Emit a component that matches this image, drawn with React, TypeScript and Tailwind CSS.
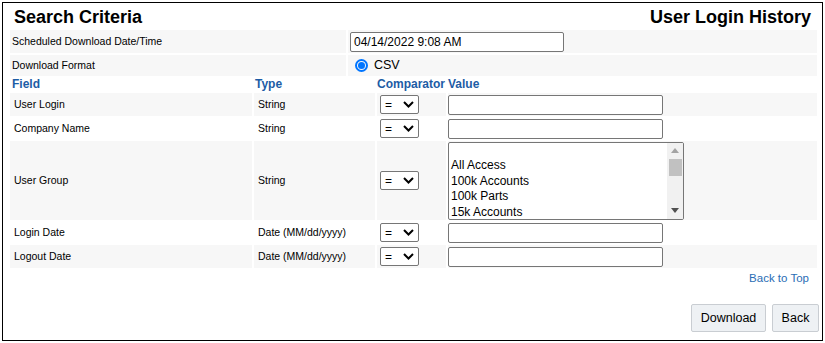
import React from "react";

const font = { fontFamily: '"Liberation Sans", Arial, sans-serif' };

function Chevron() {
  return (
    <svg width="11" height="7" viewBox="0 0 11 7" className="block">
      <path d="M1 1 L5.5 5.5 L10 1" fill="none" stroke="#000" strokeWidth="2" />
    </svg>
  );
}

function CompSelect() {
  return (
    <div className="w-[39px] h-[19px] border border-[#767676] rounded-[2px] bg-white flex items-center justify-between pl-[4px] pr-[4px]">
      <span className="text-[12px] leading-none text-black">=</span>
      <Chevron />
    </div>
  );
}

function TextInput({ w = 215 }: { w?: number }) {
  return (
    <div
      className="h-[20px] border border-[#767676] rounded-[2px] bg-white"
      style={{ width: w }}
    />
  );
}

function ListBox() {
  const opts = ["", "All Access", "100k Accounts", "100k Parts", "15k Accounts"];
  return (
    <div className="w-[236px] h-[78px] border border-[#767676] rounded-[2px] bg-white flex overflow-hidden">
      <div className="flex-1 flex flex-col pl-[2px]">
        {opts.map((o, i) => (
          <div key={i} className="h-[15.5px] text-[12px] leading-[15.5px] text-black whitespace-nowrap">
            {o || "\u00a0"}
          </div>
        ))}
      </div>
      <div className="w-[16px] bg-[#f1f1f1] flex flex-col items-center">
        <div className="h-[16px] flex items-center justify-center">
          <svg width="8" height="5" viewBox="0 0 8 5">
            <path d="M0 5 L4 0 L8 5 Z" fill="#a3a3a3" />
          </svg>
        </div>
        <div className="w-[13px] h-[17px] bg-[#c1c1c1]" />
        <div className="flex-1" />
        <div className="h-[16px] flex items-center justify-center">
          <svg width="8" height="5" viewBox="0 0 8 5">
            <path d="M0 0 L8 0 L4 5 Z" fill="#505050" />
          </svg>
        </div>
      </div>
    </div>
  );
}

type Row = { field: string; type: string; list?: boolean; bg: string };

const rows: Row[] = [
  { field: "User Login", type: "String", bg: "bg-[#f7f7f7]" },
  { field: "Company Name", type: "String", bg: "bg-white" },
  { field: "User Group", type: "String", list: true, bg: "bg-[#f7f7f7]" },
  { field: "Login Date", type: "Date (MM/dd/yyyy)", bg: "bg-white" },
  { field: "Logout Date", type: "Date (MM/dd/yyyy)", bg: "bg-[#f7f7f7]" },
];

export default function App() {
  return (
    <div className="p-[2px] bg-white" style={font}>
      <div className="w-[821px] h-[339px] border border-black bg-white flex flex-col">
        {/* Title */}
        <div className="h-[27px] flex items-end justify-between pl-[11px] pr-[11px] pb-[2px]">
          <span className="text-[18px] font-bold text-black leading-[21px]">Search Criteria</span>
          <span className="text-[18px] font-bold text-black leading-[21px]">User Login History</span>
        </div>

        <div className="pl-[7px] pr-[5px] flex flex-col">
          {/* Scheduled */}
          <div className="grid grid-cols-[336px_1fr] gap-x-[2px] h-[23px]">
            <div className="bg-[#f7f7f7] flex items-center pl-[2px] text-[10.5px] text-black">
              Scheduled Download Date/Time
            </div>
            <div className="bg-[#f7f7f7] flex items-center pl-[2px]">
              <div className="w-[214px] h-[20px] border border-[#767676] rounded-[2px] bg-white flex items-center pl-[3px] text-[12px] text-black">
                04/14/2022 9:08 AM
              </div>
            </div>
          </div>
          {/* Download format */}
          <div className="grid grid-cols-[336px_1fr] gap-x-[2px] h-[21px] mt-[2px]">
            <div className="bg-[#f7f7f7] flex items-center pl-[2px] text-[10.5px] text-black">
              Download Format
            </div>
            <div className="bg-[#f7f7f7] flex items-center pl-[7px] gap-[6px]">
              <div className="w-[13px] h-[13px] rounded-full border-2 border-[#0075ff] flex items-center justify-center">
                <div className="w-[7px] h-[7px] rounded-full bg-[#0075ff]" />
              </div>
              <span className="text-[12.5px] text-black">CSV</span>
            </div>
          </div>
          {/* Header */}
          <div className="grid grid-cols-[242px_121px_69px_1fr] gap-x-[2px] h-[16px] items-end text-[12px] font-bold text-[#1d5ca5] leading-[15px]">
            <div className="pl-[2px]">Field</div>
            <div className="pl-[1px]">Type</div>
            <div className="whitespace-nowrap">Comparator</div>
            <div>Value</div>
          </div>
          {/* Data rows */}
          <div className="flex flex-col gap-y-[1px] mt-[1px]">
            {rows.map((r) => (
              <div
                key={r.field}
                className={`grid grid-cols-[242px_121px_69px_1fr] gap-x-[2px] ${r.list ? "h-[79px]" : "h-[23px]"}`}
              >
                <div className={`${r.bg} flex items-center pl-[4px] text-[10.5px] text-black`}>{r.field}</div>
                <div className={`${r.bg} flex items-center pl-[4px] text-[10.5px] text-black`}>{r.type}</div>
                <div className={`${r.bg} flex items-center pl-[3px]`}>
                  <CompSelect />
                </div>
                <div className={`${r.bg} flex items-center`}>
                  {r.list ? <ListBox /> : <TextInput />}
                </div>
              </div>
            ))}
          </div>
          {/* Back to top */}
          <div className="flex justify-end pr-[8px] mt-[2px]">
            <span className="text-[11.5px] text-[#2a6db5] leading-[16px]">Back to Top</span>
          </div>
        </div>

        <div className="flex-1" />
        {/* Buttons */}
        <div className="flex justify-end gap-[6px] pr-[3px] pb-[8px]">
          <button className="w-[75px] h-[28px] bg-[#eef1f4] border border-[#c9cdd2] rounded-[2px] text-[12.5px] text-black">
            Download
          </button>
          <button className="w-[47px] h-[28px] bg-[#eef1f4] border border-[#c9cdd2] rounded-[2px] text-[12.5px] text-black">
            Back
          </button>
        </div>
      </div>
    </div>
  );
}
